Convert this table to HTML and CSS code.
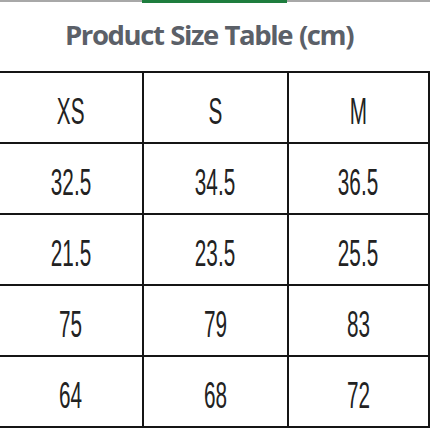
FILE: index.html
```html
<!DOCTYPE html>
<html>
<head>
<meta charset="utf-8">
<link rel="stylesheet" href="styles.css">
</head>
<body>
<div class="page">
  <div class="header">
    <div class="topline"><div class="green"></div></div>
    <h1 class="title">Product Size Table (cm)</h1>
  </div>
  <div class="table">
    <div class="cell"><span>XS</span></div>
    <div class="cell"><span>S</span></div>
    <div class="cell"><span>M</span></div>
    <div class="cell"><span>32.5</span></div>
    <div class="cell"><span>34.5</span></div>
    <div class="cell"><span>36.5</span></div>
    <div class="cell"><span>21.5</span></div>
    <div class="cell"><span>23.5</span></div>
    <div class="cell"><span>25.5</span></div>
    <div class="cell"><span>75</span></div>
    <div class="cell"><span>79</span></div>
    <div class="cell"><span>83</span></div>
    <div class="cell"><span>64</span></div>
    <div class="cell"><span>68</span></div>
    <div class="cell"><span>72</span></div>
  </div>
</div>
</body>
</html>
```

FILE: styles.css
```css
html, body {
  margin: 0;
  padding: 0;
  background: #fff;
}
.page {
  width: 430px;
  height: 430px;
  overflow: hidden;
  background: #fff;
}
.header {
  height: 71px;
  display: flex;
  flex-direction: column;
}
.topline {
  height: 2px;
  background: #a8a8a8;
  display: flex;
  padding-left: 142px;
}
.green {
  width: 145px;
  height: 3px;
  background: #1e7d3e;
}
.title {
  margin: 0;
  padding: 15px 12px 0 0;
  text-align: center;
  font-family: "Open Sans", "Liberation Sans", sans-serif;
  font-weight: 700;
  font-size: 27.5px;
  line-height: 36px;
  color: #5b6068;
  letter-spacing: -1.4px;
  word-spacing: 1px;
}
.table {
  display: grid;
  grid-template-columns: 142px 143px 139px;
  grid-auto-rows: 69px;
  gap: 2px;
  padding: 2px 2px 2px 0;
  background: #151515;
  width: 428px;
}
.cell {
  background: #fff;
  display: flex;
  align-items: center;
  justify-content: center;
  padding-top: 8px;
  box-sizing: border-box;
}
.cell span {
  font-family: "Liberation Sans", Arial, sans-serif;
  font-size: 37px;
  line-height: 1;
  color: #222;
  transform: scaleX(0.56);
  display: inline-block;
}
```
